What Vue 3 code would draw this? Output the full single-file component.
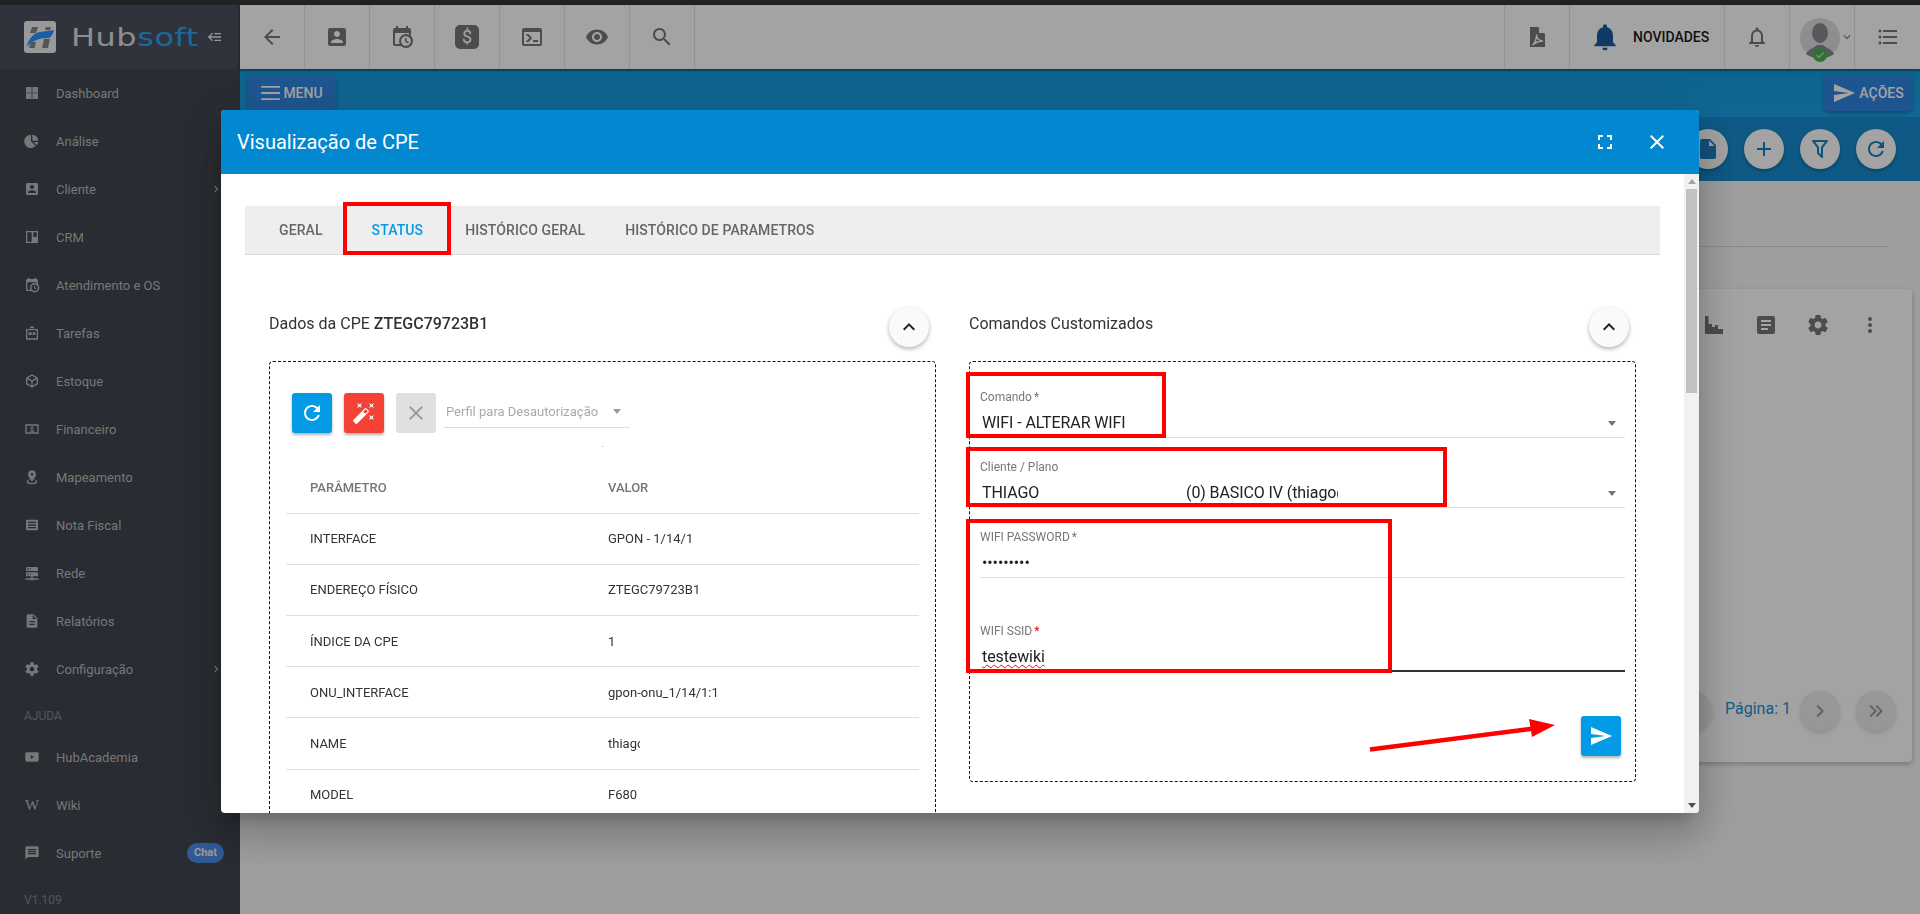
<template>
  <div class="app">
    <div class="top-strip"></div>
    <div class="shell">
      <!-- sidebar -->
      <aside class="sidebar">
        <div class="brand">
          <svg class="logo" viewBox="0 0 32 32">
            <rect width="32" height="32" rx="3" fill="#f0f0f0" />
            <path d="M8 6h6l-2 6H6zM22 6h5l-1 3h-5zM7 21h5l-1.5 6H5zM20 18h6l-2 9h-6z" fill="#858585" />
            <path d="M2.5 26C5 17 10 12 16 11L30 9C29 13 27 16 25 17L17 17.5C11 19 6 22 2.5 26z" fill="#2a93ff" />
          </svg>
          <span class="brand-name">Hub<span class="brand-soft">soft</span></span>
          <svg class="ic brand-toggle" viewBox="0 0 24 24"><path :d="icons.backburger" /></svg>
        </div>
        <nav class="nav">
          <template v-for="item in menu" :key="item.label">
            <div v-if="item.section" class="nav-section">{{ item.label }}</div>
            <div v-else class="nav-item">
              <span v-if="item.glyph" class="nav-glyph">W</span>
              <svg v-else-if="item.dollar" class="nav-icon" viewBox="0 0 24 24">
                <path d="M2 5h20v14H2zM4 7v10h16V7z" fill-rule="evenodd" />
                <text x="12" y="16" text-anchor="middle" class="dollar-small">$</text>
              </svg>
              <svg v-else class="nav-icon" viewBox="0 0 24 24"><path :d="item.icon" fill-rule="evenodd" /></svg>
              <span class="nav-label">{{ item.label }}</span>
              <svg v-if="item.arrow" class="nav-arrow" viewBox="0 0 24 24"><path :d="icons.chevronRight" /></svg>
              <span v-if="item.badge" class="nav-badge">{{ item.badge }}</span>
            </div>
          </template>
          <div class="nav-section nav-version">V1.109</div>
        </nav>
      </aside>

      <!-- pagina atras do modal -->
      <main class="main">
        <header class="topbar">
          <div class="cell"><svg class="ic" viewBox="0 0 24 24"><path :d="icons.back" /></svg></div>
          <div class="cell"><svg class="ic" viewBox="0 0 24 24"><path :d="icons.accountBox" /></svg></div>
          <div class="cell"><svg class="ic" viewBox="0 0 24 24"><path :d="icons.calendarClock" /></svg></div>
          <div class="cell">
            <svg class="ic" viewBox="0 0 24 24">
              <rect width="24" height="24" rx="5" />
              <text x="12" y="18" text-anchor="middle" class="dollar-big">$</text>
            </svg>
          </div>
          <div class="cell"><svg class="ic" viewBox="0 0 24 24"><path :d="icons.console" /></svg></div>
          <div class="cell"><svg class="ic" viewBox="0 0 24 24"><path :d="icons.eye" fill-rule="evenodd" /></svg></div>
          <div class="cell"><svg class="ic" viewBox="0 0 24 24"><path :d="icons.search" /></svg></div>
          <div class="topbar-space"></div>
          <div class="cell cell-first">
            <svg class="ic" viewBox="0 0 24 24">
              <path d="M5 2h8l7 7v13H5z" />
              <path d="M14 2.5l5.5 5.5H14z" class="pdf-fold" />
              <path d="M7.5 20c2-1.5 4.5-6 4-10.5 0 4 3 6.5 6.5 6.5-3.5 0-7.5 1.5-10.5 4z" class="pdf-mark" />
            </svg>
          </div>
          <div class="cell cell-news">
            <svg class="ic bell-blue" viewBox="0 0 24 24"><path :d="icons.bell" /></svg>
            <span class="news-text">NOVIDADES</span>
          </div>
          <div class="cell"><svg class="ic" viewBox="0 0 24 24"><path :d="icons.bellOutline" /></svg></div>
          <div class="cell cell-avatar">
            <svg class="avatar" viewBox="0 0 44 46">
              <circle cx="20" cy="20" r="20" fill="#dfdfdf" />
              <ellipse cx="20" cy="15" rx="8" ry="10" fill="#858a90" />
              <path d="M6 36c3-6 9-6 11-9h6c2 3 8 3 11 9-4 3-9 4-14 4S10 39 6 36z" fill="#858a90" />
              <circle cx="20" cy="37" r="7" fill="#4fb04f" />
              <path d="M16.5 37l2.5 2.5 4.5-5" fill="none" stroke="#b8dcb8" stroke-width="1.3" />
            </svg>
            <svg class="avatar-caret" viewBox="0 0 24 24"><path :d="icons.chevronDown" /></svg>
          </div>
          <div class="cell"><svg class="ic" viewBox="0 0 24 24"><path :d="icons.list" /></svg></div>
        </header>

        <div class="teal-bar">
          <button class="teal-btn">
            <svg class="menu-lines" viewBox="0 0 20 15"><path d="M0 0h20v2H0zM0 6.5h20v2H0zM0 13h20v2H0z" /></svg>
            MENU
          </button>
          <button class="teal-btn">
            <svg class="ic send-small" viewBox="0 0 24 24"><path :d="icons.send" /></svg>
            AÇÕES
          </button>
        </div>

        <div class="band">
          <button class="round-btn"><svg class="ic" viewBox="0 0 24 24"><path :d="icons.file" /></svg></button>
          <button class="round-btn"><svg class="ic" viewBox="0 0 24 24"><path :d="icons.plus" /></svg></button>
          <button class="round-btn"><svg class="ic" viewBox="0 0 24 24"><path :d="icons.filter" /></svg></button>
          <button class="round-btn"><svg class="ic" viewBox="0 0 24 24"><path :d="icons.refresh" /></svg></button>
        </div>

        <div class="page-head"></div>

        <section class="card">
          <div class="card-tools">
            <svg class="ic" viewBox="0 0 24 24"><path d="M3 21V3h3.5v8H10v3h3v-2h3v4h5v5z" /></svg>
            <svg class="ic" viewBox="0 0 24 24"><path :d="icons.article" /></svg>
            <svg class="ic" viewBox="0 0 24 24"><path :d="icons.gear" /></svg>
            <svg class="ic" viewBox="0 0 24 24"><path :d="icons.dots" /></svg>
          </div>
          <div class="pager">
            <button class="pager-btn"></button>
            <span class="pager-text">Página: 1</span>
            <button class="pager-btn"><svg class="ic" viewBox="0 0 24 24"><path :d="icons.chevronRight" /></svg></button>
            <button class="pager-btn"><svg class="ic" viewBox="0 0 24 24"><path :d="icons.chevronDouble" /></svg></button>
          </div>
        </section>
      </main>
    </div>

    <!-- modal -->
    <div class="overlay">
      <div class="modal">
        <div class="modal-head">
          <span class="modal-title">Visualização de CPE</span>
          <svg class="ic" viewBox="0 0 24 24"><path :d="icons.fullscreen" /></svg>
          <svg class="ic" viewBox="0 0 24 24"><path :d="icons.close" /></svg>
        </div>
        <div class="modal-body">
          <div class="modal-scroll">
            <div class="tabs">
              <div v-for="tab in tabs" :key="tab" :class="['tab', tab === 'Status' ? 'active' : '']">{{ tab }}</div>
            </div>

            <div class="columns">
              <div class="column">
                <div class="col-head">
                  <div class="col-title">Dados da CPE <b>ZTEGC79723B1</b></div>
                  <button class="collapse-btn"><svg class="ic" viewBox="0 0 24 24"><path :d="icons.chevronUp" /></svg></button>
                </div>
                <div class="dash-box">
                  <div class="toolbar">
                    <button class="tool-btn blue"><svg class="ic" viewBox="0 0 24 24"><path :d="icons.refresh" /></svg></button>
                    <button class="tool-btn red"><svg class="ic" viewBox="0 0 24 24"><path :d="icons.wand" /></svg></button>
                    <button class="tool-btn gray"><svg class="ic" viewBox="0 0 24 24"><path :d="icons.close" /></svg></button>
                    <div class="mini-select">
                      <span>Perfil para Desautorização</span>
                      <i class="caret"></i>
                    </div>
                  </div>
                  <div class="speck">.</div>
                  <table class="params">
                    <thead>
                      <tr><th class="col-param">PARÂMETRO</th><th>VALOR</th></tr>
                    </thead>
                    <tbody>
                      <tr v-for="row in params" :key="row.name">
                        <td>{{ row.name }}</td>
                        <td><span :class="row.clip ? 'clip-name' : ''">{{ row.value }}</span></td>
                      </tr>
                    </tbody>
                  </table>
                </div>
              </div>

              <div class="column">
                <div class="col-head">
                  <div class="col-title">Comandos Customizados</div>
                  <button class="collapse-btn"><svg class="ic" viewBox="0 0 24 24"><path :d="icons.chevronUp" /></svg></button>
                </div>
                <div class="dash-box form-box">
                  <div class="field">
                    <label>Comando<em>*</em></label>
                    <div class="value"><span>WIFI - ALTERAR WIFI</span><i class="caret"></i></div>
                  </div>
                  <div class="field">
                    <label>Cliente / Plano</label>
                    <div class="value">
                      <span class="client-name">THIAGO</span>
                      <span class="client-plan">(0) BASICO IV (thiago@wiki)</span>
                      <i class="caret"></i>
                    </div>
                  </div>
                  <div class="field">
                    <label>WIFI PASSWORD<em>*</em></label>
                    <div class="value">•••••••••</div>
                  </div>
                  <div class="field focused">
                    <label>WIFI SSID<em class="req">*</em></label>
                    <div class="value"><span class="spell">testewiki</span></div>
                  </div>
                  <div class="form-actions">
                    <button class="tool-btn blue"><svg class="ic" viewBox="0 0 24 24"><path :d="icons.send" /></svg></button>
                  </div>
                </div>
              </div>
            </div>
          </div>
          <div class="scrollbar">
            <i class="sb-up"></i>
            <div class="sb-thumb"></div>
            <i class="sb-down"></i>
          </div>
        </div>
      </div>

      <!-- marcacoes vermelhas do tutorial -->
      <div class="mark mark-tab"></div>
      <div class="mark mark-cmd"></div>
      <div class="mark mark-client"></div>
      <div class="mark mark-wifi"></div>
      <svg class="mark-arrow" viewBox="0 0 200 40">
        <path d="M2 33.5L166 12.5" stroke="#f00" stroke-width="4.5" fill="none" />
        <path d="M161 3L187 9 164 21z" fill="#f00" />
      </svg>
    </div>
  </div>
</template>

<script setup>
const icons = {
  backburger: 'M5,13L9,17L7.6,18.42L1.18,12L7.6,5.58L9,7L5,11H21V13H5M21,6V8H11V6H21M21,16V18H11V16H21Z',
  chevronRight: 'M10 6L8.59 7.41 13.17 12l-4.58 4.59L10 18l6-6z',
  chevronDouble: 'M5.59,7.41L7,6L13,12L7,18L5.59,16.59L10.17,12L5.59,7.41M11.59,7.41L13,6L19,12L13,18L11.59,16.59L16.17,12L11.59,7.41Z',
  chevronDown: 'M7.41 8.59L12 13.17l4.59-4.58L18 10l-6 6-6-6z',
  chevronUp: 'M7.41 15.41L12 10.83l4.59 4.58L18 14l-6-6-6 6z',
  back: 'M20 11H7.83l5.59-5.59L12 4l-8 8 8 8 1.41-1.41L7.83 13H20v-2z',
  accountBox: 'M3 5v14c0 1.1.89 2 2 2h14c1.1 0 2-.9 2-2V5c0-1.1-.9-2-2-2H5c-1.11 0-2 .9-2 2zm12 4c0 1.66-1.34 3-3 3s-3-1.34-3-3 1.34-3 3-3 3 1.34 3 3zm-9 8c0-2 4-3.1 6-3.1s6 1.1 6 3.1v1H6v-1z',
  calendarClock: 'M15,13H16.5V15.82L18.94,17.23L18.19,18.53L15,16.69V13M19,8H5V19H9.67C9.24,18.09 9,17.07 9,16A7,7 0 0,1 16,9C17.07,9 18.09,9.24 19,9.67V8M5,21C3.89,21 3,20.1 3,19V5C3,3.89 3.89,3 5,3H6V1H8V3H16V1H18V3H19A2,2 0 0,1 21,5V11.1C22.24,12.36 23,14.09 23,16A7,7 0 0,1 16,23C14.09,23 12.36,22.24 11.1,21H5M16,11.15A4.85,4.85 0 0,0 11.15,16C11.15,18.68 13.32,20.85 16,20.85A4.85,4.85 0 0,0 20.85,16C20.85,13.32 18.68,11.15 16,11.15Z',
  console: 'M20,19V7H4V19H20M20,3A2,2 0 0,1 22,5V19A2,2 0 0,1 20,21H4A2,2 0 0,1 2,19V5C2,3.89 2.9,3 4,3H20M13,17V15H18V17H13M9.58,13L5.57,9H8.4L11.7,12.3C12.09,12.69 12.09,13.33 11.7,13.72L8.42,17H5.59L9.58,13Z',
  eye: 'M12 4.5C7 4.5 2.73 7.61 1 12c1.73 4.39 6 7.5 11 7.5s9.27-3.11 11-7.5c-1.73-4.39-6-7.5-11-7.5zM12 17c-2.76 0-5-2.24-5-5s2.24-5 5-5 5 2.24 5 5-2.24 5-5 5zm0-8c-1.66 0-3 1.34-3 3s1.34 3 3 3 3-1.34 3-3-1.34-3-3-3z',
  search: 'M15.5 14h-.79l-.28-.27C15.41 12.59 16 11.11 16 9.5 16 5.91 13.09 3 9.5 3S3 5.91 3 9.5 5.91 16 9.5 16c1.61 0 3.09-.59 4.23-1.57l.27.28v.79l5 4.99L20.49 19l-4.99-5zm-6 0C7.01 14 5 11.99 5 9.5S7.01 5 9.5 5 14 7.01 14 9.5 11.99 14 9.5 14z',
  bell: 'M12 22c1.1 0 2-.9 2-2h-4c0 1.1.89 2 2 2zm6-6v-5c0-3.07-1.64-5.64-4.5-6.32V4c0-.83-.67-1.5-1.5-1.5s-1.5.67-1.5 1.5v.68C7.63 5.36 6 7.92 6 11v5l-2 2v1h16v-1l-2-2z',
  bellOutline: 'M12 22c1.1 0 2-.9 2-2h-4c0 1.1.9 2 2 2zm6-6v-5c0-3.07-1.63-5.64-4.5-6.32V4c0-.83-.67-1.5-1.5-1.5s-1.5.67-1.5 1.5v.68C7.64 5.36 6 7.92 6 11v5l-2 2v1h16v-1l-2-2zm-2 1H8v-6c0-2.48 1.51-4.5 4-4.5s4 2.02 4 4.5v6z',
  list: 'M4 10.5c-.83 0-1.5.67-1.5 1.5s.67 1.5 1.5 1.5 1.5-.67 1.5-1.5-.67-1.5-1.5-1.5zm0-6c-.83 0-1.5.67-1.5 1.5S3.17 7.5 4 7.5 5.5 6.83 5.5 6 4.83 4.5 4 4.5zm0 12c-.83 0-1.5.68-1.5 1.5s.68 1.5 1.5 1.5 1.5-.68 1.5-1.5-.67-1.5-1.5-1.5zM7 19h14v-2H7v2zm0-6h14v-2H7v2zm0-8v2h14V5H7z',
  send: 'M2.01 21L23 12 2.01 3 2 10l15 2-15 2z',
  fullscreen: 'M7 14H5v5h5v-2H7v-3zm-2-4h2V7h3V5H5v5zm12 7h-3v2h5v-5h-2v3zM14 5v2h3v3h2V5h-5z',
  close: 'M19 6.41L17.59 5 12 10.59 6.41 5 5 6.41 10.59 12 5 17.59 6.41 19 12 13.41 17.59 19 19 17.59 13.41 12z',
  refresh: 'M17.65 6.35C16.2 4.9 14.21 4 12 4c-4.42 0-7.99 3.58-7.99 8s3.57 8 7.99 8c3.73 0 6.84-2.55 7.73-6h-2.08c-.82 2.33-3.04 4-5.65 4-3.31 0-6-2.69-6-6s2.69-6 6-6c1.66 0 3.14.69 4.22 1.78L13 11h7V4l-2.35 2.35z',
  wand: 'M7.5,5.6L5,7L6.4,4.5L5,2L7.5,3.4L10,2L8.6,4.5L10,7L7.5,5.6M19.5,15.4L22,14L20.6,16.5L22,19L19.5,17.6L17,19L18.4,16.5L17,14L19.5,15.4M22,2L20.6,4.5L22,7L19.5,5.6L17,7L18.4,4.5L17,2L19.5,3.4L22,2M13.34,12.78L15.78,10.34L13.66,8.22L11.22,10.66L13.34,12.78M14.37,7.29L16.71,9.63C17.1,10 17.1,10.65 16.71,11.04L5.04,22.71C4.65,23.1 4,23.1 3.63,22.71L1.29,20.37C0.9,20 0.9,19.35 1.29,18.96L12.96,7.29C13.35,6.9 14,6.9 14.37,7.29Z',
  plus: 'M19 13h-6v6h-2v-6H5v-2h6V5h2v6h6v2z',
  filter: 'M15,19.88C15.04,20.18 14.94,20.5 14.71,20.71C14.32,21.1 13.69,21.1 13.3,20.71L9.29,16.7C9.06,16.47 8.96,16.16 9,15.87V10.75L4.21,4.62C3.87,4.19 3.95,3.56 4.38,3.22C4.57,3.08 4.78,3 5,3V3H19V3C19.22,3 19.43,3.08 19.62,3.22C20.05,3.56 20.13,4.19 19.79,4.62L15,10.75V19.88M7.04,5L11,10.06V15.58L13,17.58V10.05L16.96,5H7.04Z',
  file: 'M6 2c-1.1 0-1.99.9-1.99 2L4 20c0 1.1.89 2 1.99 2H18c1.1 0 2-.9 2-2V8l-6-6H6zm7 7V3.5L18.5 9H13z',
  article: 'M19 3H5c-1.1 0-2 .9-2 2v14c0 1.1.9 2 2 2h14c1.1 0 2-.9 2-2V5c0-1.1-.9-2-2-2zm-5 14H7v-2h7v2zm3-4H7v-2h10v2zm0-4H7V7h10v2z',
  gear: 'M19.43 12.98c.04-.32.07-.64.07-.98s-.03-.66-.07-.98l2.11-1.65c.19-.15.24-.42.12-.64l-2-3.46c-.12-.22-.39-.3-.61-.22l-2.49 1c-.52-.4-1.08-.73-1.69-.98l-.38-2.65C14.46 2.18 14.25 2 14 2h-4c-.25 0-.46.18-.49.42l-.38 2.65c-.61.25-1.17.59-1.69.98l-2.49-1c-.23-.09-.49 0-.61.22l-2 3.46c-.13.22-.07.49.12.64l2.11 1.65c-.04.32-.07.65-.07.98s.03.66.07.98l-2.11 1.65c-.19.15-.24.42-.12.64l2 3.46c.12.22.39.3.61.22l2.49-1c.52.4 1.08.73 1.69.98l.38 2.65c.03.24.24.42.49.42h4c.25 0 .46-.18.49-.42l.38-2.65c.61-.25 1.17-.59 1.69-.98l2.49 1c.23.09.49 0 .61-.22l2-3.46c.12-.22.07-.49-.12-.64l-2.11-1.65zM12 15.5c-1.93 0-3.5-1.57-3.5-3.5s1.57-3.5 3.5-3.5 3.5 1.57 3.5 3.5-1.57 3.5-3.5 3.5z',
  dots: 'M12 8c1.1 0 2-.9 2-2s-.9-2-2-2-2 .9-2 2 .9 2 2 2zm0 2c-1.1 0-2 .9-2 2s.9 2 2 2 2-.9 2-2-.9-2-2-2zm0 6c-1.1 0-2 .9-2 2s.9 2 2 2 2-.9 2-2-.9-2-2-2z'
}

const menu = [
  { label: 'Dashboard', icon: 'M3 3h8.5v8.5H3zM12.5 3H21v8.5h-8.5zM3 12.5h8.5V21H3zM12.5 12.5H21V21h-8.5z' },
  { label: 'Análise', icon: 'M10.5 2.5v10l7 7A10 10 0 1 1 10.5 2.5zM12.5 2.5a10 10 0 0 1 9 9h-9zM14 13.5h7.5a10 10 0 0 1-2.5 5z' },
  { label: 'Cliente', icon: icons.accountBox, arrow: true },
  { label: 'CRM', icon: 'M3 3h18v18H3zM5 5v14h6.5V5zM14 5v7h5V5z' },
  { label: 'Atendimento e OS', icon: icons.calendarClock },
  { label: 'Tarefas', icon: 'M12 1l4 4H8zM3 6h18v16H3zM5 8v12h14V8zM7 11h4.5v4H7zM13 11h4v4h-4z' },
  { label: 'Estoque', icon: 'M21,16.5C21,16.88 20.79,17.21 20.47,17.38L12.57,21.82C12.41,21.94 12.21,22 12,22C11.79,22 11.59,21.94 11.43,21.82L3.53,17.38C3.21,17.21 3,16.88 3,16.5V7.5C3,7.12 3.21,6.79 3.53,6.62L11.43,2.18C11.59,2.06 11.79,2 12,2C12.21,2 12.41,2.06 12.57,2.18L20.47,6.62C20.79,6.79 21,7.12 21,7.5V16.5M12,4.15L6.04,7.5L12,10.85L17.96,7.5L12,4.15M5,15.91L11,19.29V12.58L5,9.21V15.91M19,15.91V9.21L13,12.58V19.29L19,15.91Z' },
  { label: 'Financeiro', dollar: true },
  { label: 'Mapeamento', icon: 'M12,2C15.31,2 18,4.66 18,7.95C18,12.41 12,19 12,19C12,19 6,12.41 6,7.95C6,4.66 8.69,2 12,2M12,6A2,2 0 0,0 10,8A2,2 0 0,0 12,10A2,2 0 0,0 14,8A2,2 0 0,0 12,6M20,19C20,21.21 16.42,23 12,23C7.58,23 4,21.21 4,19C4,17.71 5.22,16.56 7.11,15.83L7.75,16.74C6.67,17.19 6,17.81 6,18.5C6,19.88 8.69,21 12,21C15.31,21 18,19.88 18,18.5C18,17.81 17.33,17.19 16.25,16.74L16.89,15.83C18.78,16.56 20,17.71 20,19Z' },
  { label: 'Nota Fiscal', icon: 'M3 4h18v16H3zM6 7v2h12V7zM6 11v2h12v-2zM6 15v2h12v-2z' },
  { label: 'Rede', icon: 'M13,19H14A1,1 0 0,1 15,20H22V22H15A1,1 0 0,1 14,23H10A1,1 0 0,1 9,22H2V20H9A1,1 0 0,1 10,19H11V17H4A1,1 0 0,1 3,16V12A1,1 0 0,1 4,11H20A1,1 0 0,1 21,12V16A1,1 0 0,1 20,17H13V19M4,3H20A1,1 0 0,1 21,4V8A1,1 0 0,1 20,9H4A1,1 0 0,1 3,8V4A1,1 0 0,1 4,3M9,7H10V5H9V7M9,15H10V13H9V15M5,5V7H7V5H5M5,13V15H7V13H5Z' },
  { label: 'Relatórios', icon: 'M14 2H6c-1.1 0-1.99.9-1.99 2L4 20c0 1.1.89 2 1.99 2H18c1.1 0 2-.9 2-2V8l-6-6zm2 16H8v-2h8v2zm0-4H8v-2h8v2zm-3-5V3.5L18.5 9H13z' },
  { label: 'Configuração', icon: icons.gear, arrow: true },
  { label: 'AJUDA', section: true },
  { label: 'HubAcademia', icon: 'M4 5h16a2 2 0 0 1 2 2v10a2 2 0 0 1-2 2H4a2 2 0 0 1-2-2V7a2 2 0 0 1 2-2zM10 9v6l5-3z' },
  { label: 'Wiki', glyph: true },
  { label: 'Suporte', icon: 'M20 2H4c-1.1 0-1.99.9-1.99 2L2 22l4-4h14c1.1 0 2-.9 2-2V4c0-1.1-.9-2-2-2zm-2 12H6v-2h12v2zm0-3H6V9h12v2zm0-3H6V6h12v2z', badge: 'Chat' }
]

const tabs = ['Geral', 'Status', 'Histórico Geral', 'Histórico de Parametros']

const params = [
  { name: 'INTERFACE', value: 'GPON - 1/14/1' },
  { name: 'ENDEREÇO FÍSICO', value: 'ZTEGC79723B1' },
  { name: 'ÍNDICE DA CPE', value: '1' },
  { name: 'ONU_INTERFACE', value: 'gpon-onu_1/14/1:1' },
  { name: 'NAME', value: 'thiago', clip: true },
  { name: 'MODEL', value: 'F680' }
]
</script>

<style>
html, body {
  margin: 0;
  background: #f7f7f7;
}
</style>

<style scoped>
.app {
  height: 100vh;
  overflow: hidden;
  display: flex;
  flex-direction: column;
  font-family: Roboto, "Liberation Sans", sans-serif;
  background: #f7f7f7;
}

button {
  font-family: inherit;
  border: none;
  padding: 0;
  cursor: pointer;
}

.ic {
  width: 24px;
  height: 24px;
  fill: currentColor;
  flex: 0 0 auto;
}

.top-strip {
  height: 5px;
  background: #34363c;
  flex: 0 0 auto;
}

.shell {
  flex: 1;
  display: flex;
  min-height: 0;
}

/* sidebar */
.sidebar {
  width: 240px;
  flex: 0 0 240px;
  background: #40454f;
  color: #bbb;
}

.brand {
  height: 64px;
  background: #4b505e;
  display: flex;
  align-items: center;
  padding-left: 24px;
  box-sizing: border-box;
}

.logo {
  width: 32px;
  height: 32px;
  flex: 0 0 auto;
}

.brand-name {
  display: inline-block;
  width: 133px;
  margin-left: 15px;
  font-family: "DejaVu Sans", sans-serif;
  font-size: 25px;
  letter-spacing: 0.4px;
  white-space: nowrap;
  color: #dedede;
  transform: scaleX(1.28);
  transform-origin: left center;
}

.brand-soft {
  color: #29a5f0;
}

.brand-toggle {
  width: 16px;
  height: 16px;
  margin-left: 3px;
  color: #eee;
}

.nav {
  font-size: 13px;
}

.nav-item {
  height: 48px;
  display: flex;
  align-items: center;
  padding-left: 24px;
}

.nav-icon {
  width: 16px;
  height: 16px;
  fill: #bbb;
  flex: 0 0 auto;
}

.dollar-small {
  font-size: 11px;
  font-weight: 700;
  fill: #bbb;
}

.nav-glyph {
  width: 16px;
  font-family: "Liberation Serif", serif;
  font-size: 15px;
  text-align: center;
}

.nav-label {
  margin-left: 16px;
  flex: 1;
}

.nav-arrow {
  width: 14px;
  height: 14px;
  fill: #bbb;
  margin-right: 17px;
}

.nav-badge {
  width: 37px;
  height: 20px;
  line-height: 20px;
  text-align: center;
  border-radius: 10px;
  background: #4a8de8;
  color: #eee;
  font-size: 11px;
  font-weight: 700;
  margin-right: 16px;
}

.nav-section {
  height: 40px;
  padding: 16px 0 0 24px;
  box-sizing: border-box;
  font-size: 12px;
  color: #838690;
}

/* pagina */
.main {
  flex: 1;
  min-width: 0;
  display: flex;
  flex-direction: column;
}

.topbar {
  height: 64px;
  flex: 0 0 auto;
  background: #fff;
  display: flex;
  box-shadow: 0 1px 3px rgba(0, 0, 0, 0.6);
  position: relative;
  color: #777;
}

.topbar-space {
  flex: 1;
  border-right: 1px solid #e4e4e4;
}

.cell {
  width: 65px;
  box-sizing: border-box;
  border-right: 1px solid #e4e4e4;
  display: flex;
  align-items: center;
  justify-content: center;
}

.cell:last-child {
  border-right: none;
}

.dollar-big {
  font-size: 18px;
  fill: #fff;
}

.pdf-fold {
  fill: #fff;
}

.pdf-mark {
  fill: none;
  stroke: #fff;
  stroke-width: 1.4;
}

.cell-news {
  width: 155px;
  justify-content: flex-start;
  padding-left: 19px;
}

.bell-blue {
  width: 32px;
  height: 32px;
  color: #175b9f;
}

.news-text {
  margin-left: 12px;
  font-size: 14px;
  font-weight: 500;
  color: #1a1a1a;
}

.cell-avatar {
  justify-content: flex-start;
  padding-left: 10px;
}

.avatar {
  width: 44px;
  height: 46px;
  margin-top: 8px;
}

.avatar-caret {
  width: 14px;
  height: 14px;
  fill: #777;
  margin-left: -4px;
}

.teal-bar {
  height: 48px;
  flex: 0 0 auto;
  box-sizing: border-box;
  padding: 6px 8px 0;
  display: flex;
  justify-content: space-between;
  background: linear-gradient(#1699dd, #1ba3ea);
}

.teal-btn {
  width: 88px;
  height: 36px;
  border-radius: 4px;
  background: #3085e1;
  color: #fff;
  font-size: 14px;
  font-weight: 500;
  display: flex;
  align-items: center;
  justify-content: center;
  gap: 3px;
  box-shadow: 0 2px 4px rgba(0, 0, 0, 0.25);
}

.menu-lines {
  width: 19px;
  height: 14px;
  fill: #fff;
}

.band {
  height: 64px;
  flex: 0 0 auto;
  background: #168cd1;
  display: flex;
  align-items: center;
  justify-content: flex-end;
  gap: 16px;
  padding-right: 24px;
  box-sizing: border-box;
}

.round-btn {
  width: 40px;
  height: 40px;
  border-radius: 50%;
  background: #fff;
  color: #1d7fc0;
  display: flex;
  align-items: center;
  justify-content: center;
  box-shadow: 0 2px 4px rgba(0, 0, 0, 0.25);
}

.page-head {
  height: 66px;
  flex: 0 0 auto;
  margin: 0 32px 0 8px;
  box-sizing: border-box;
  border-bottom: 1px solid #d8d8d8;
}

.card {
  margin: 42px 8px 0;
  height: 473px;
  background: #fff;
  border-radius: 4px;
  box-shadow: 0 2px 5px rgba(0, 0, 0, 0.25);
  display: flex;
  flex-direction: column;
  justify-content: space-between;
  color: #777;
}

.card-tools {
  display: flex;
  justify-content: flex-end;
  gap: 28px;
  padding: 24px 30px 0 0;
}

.pager {
  display: flex;
  align-items: center;
  justify-content: flex-end;
  padding: 0 16px 31px 0;
}

.pager-btn {
  width: 40px;
  height: 40px;
  border-radius: 50%;
  background: #ececec;
  color: #999;
  display: flex;
  align-items: center;
  justify-content: center;
  margin-left: 16px;
  box-shadow: 0 2px 4px rgba(0, 0, 0, 0.15);
}

.pager-text {
  font-size: 16px;
  color: #2190d6;
  margin: 0 -7px 0 13px;
  padding-bottom: 6px;
}

/* modal */
.overlay {
  position: fixed;
  inset: 0;
  background: rgba(0, 0, 0, 0.36);
  padding: 110px 221px 0;
  box-sizing: border-box;
}

.modal {
  height: 703px;
  background: #fff;
  border-radius: 4px;
  overflow: hidden;
  display: flex;
  flex-direction: column;
  box-shadow: 0 11px 15px -7px rgba(0, 0, 0, 0.2), 0 24px 38px 3px rgba(0, 0, 0, 0.14), 0 9px 46px 8px rgba(0, 0, 0, 0.12);
}

.modal-head {
  height: 64px;
  flex: 0 0 auto;
  background: #0288d1;
  color: #fff;
  display: flex;
  align-items: center;
  gap: 28px;
  padding: 0 30px 0 16px;
}

.modal-title {
  flex: 1;
  font-size: 20px;
}

.modal-body {
  flex: 1;
  min-height: 0;
  display: flex;
}

.modal-scroll {
  flex: 1;
  min-width: 0;
  padding: 32px 24px 0;
  box-sizing: border-box;
}

.scrollbar {
  width: 15px;
  flex: 0 0 15px;
  background: #f1f1f1;
  display: flex;
  flex-direction: column;
  align-items: center;
}

.sb-up {
  margin-top: 5px;
  border: 4px solid transparent;
  border-top: 0;
  border-bottom: 5px solid #a3a3a3;
}

.sb-thumb {
  width: 11px;
  height: 204px;
  margin-top: 5px;
  background: #c1c1c1;
}

.sb-down {
  margin-top: auto;
  margin-bottom: 5px;
  border: 4px solid transparent;
  border-bottom: 0;
  border-top: 5px solid #505050;
}

.tabs {
  display: flex;
  height: 49px;
  box-sizing: border-box;
  background: #eee;
  border-bottom: 1px solid #ddd;
  padding-left: 14px;
}

.tab {
  padding: 0 20px;
  display: flex;
  align-items: center;
  font-size: 14px;
  font-weight: 500;
  letter-spacing: 0.1px;
  text-transform: uppercase;
  color: #666;
}

.tab.active {
  color: #039be5;
  margin-left: 9px;
}

.tab.active + .tab {
  margin-left: 2px;
}

.columns {
  display: grid;
  grid-template-columns: 1fr 1fr;
  gap: 33px;
  align-items: start;
  padding: 52px 24px 0;
}

.col-head {
  height: 40px;
  margin-bottom: 14px;
  display: flex;
  justify-content: space-between;
  padding-right: 7px;
}

.col-title {
  font-size: 16px;
  line-height: 33px;
  color: #333;
}

.col-title b {
  font-weight: 500;
}

.collapse-btn {
  width: 40px;
  height: 40px;
  border-radius: 50%;
  background: #fafafa;
  color: #212121;
  display: flex;
  align-items: center;
  justify-content: center;
  box-shadow: 0 2px 4px rgba(0, 0, 0, 0.3);
}

.dash-box {
  border: 1px dashed #111;
  border-radius: 4px;
  padding: 31px 16px 0;
}

.toolbar {
  display: flex;
  gap: 12px;
  padding-left: 6px;
}

.tool-btn {
  width: 40px;
  height: 40px;
  border-radius: 3px;
  color: #fff;
  display: flex;
  align-items: center;
  justify-content: center;
}

.blue {
  background: #039be5;
  box-shadow: 0 2px 3px rgba(0, 0, 0, 0.3);
}

.red {
  background: #f44336;
  box-shadow: 0 2px 3px rgba(0, 0, 0, 0.3);
}

.gray {
  background: #e0e0e0;
  color: #9e9e9e;
}

.mini-select {
  width: 186px;
  height: 35px;
  box-sizing: border-box;
  margin-left: -4px;
  padding: 2px 9px 0 2px;
  border-bottom: 1px solid #ddd;
  display: flex;
  align-items: center;
  justify-content: space-between;
  font-size: 13px;
  color: #aaa;
}

.mini-select .caret {
  border-top-color: #999;
}

.caret {
  border: 4px solid transparent;
  border-bottom: 0;
  border-top: 5px solid #757575;
  flex: 0 0 auto;
}

.speck {
  height: 29px;
  line-height: 24px;
  text-align: center;
  font-size: 8px;
  color: #777;
}

.params {
  width: 100%;
  table-layout: fixed;
  border-collapse: collapse;
  font-size: 13px;
  color: #333;
}

.params tr {
  height: 51.2px;
  border-bottom: 1px solid #e0e0e0;
}

.params th {
  font-weight: 500;
  color: #777;
  text-align: left;
  padding: 0 0 0 24px;
}

.params td {
  padding: 0 0 0 24px;
}

.params .col-param {
  width: 298px;
  box-sizing: border-box;
}

.clip-name {
  display: inline-block;
  width: 32px;
  overflow: hidden;
  vertical-align: bottom;
}

.form-box {
  padding: 6px 10px 25px;
}

.field {
  height: 70px;
  box-sizing: border-box;
  padding-top: 21px;
  border-bottom: 1px solid #e0e0e0;
}

.field label {
  display: block;
  font-size: 12px;
  line-height: 16px;
  color: #777;
}

.field label em {
  font-style: normal;
  margin-left: 2px;
}

.field label .req {
  color: #f00;
}

.value {
  margin-top: 6px;
  height: 24px;
  line-height: 24px;
  font-size: 16px;
  letter-spacing: -0.1px;
  color: #212121;
  padding: 0 9px 0 2px;
  display: flex;
  align-items: center;
}

.value .caret {
  margin-left: auto;
}

.client-name {
  width: 204px;
}

.client-plan {
  width: 152px;
  overflow: hidden;
  white-space: nowrap;
}

.focused {
  margin-top: 24px;
  border-bottom: 2px solid #2b2f3a;
}

.spell {
  text-decoration: underline wavy #f00 1px;
  text-underline-offset: 2px;
}

.form-actions {
  display: flex;
  justify-content: flex-end;
  padding: 44px 4px 0 0;
}

/* marcacoes */
.mark {
  position: absolute;
  border: 4px solid #f00;
  box-sizing: border-box;
}

.mark-tab {
  left: 343px;
  top: 202px;
  width: 108px;
  height: 53px;
}

.mark-cmd {
  left: 966px;
  top: 372px;
  width: 200px;
  height: 66px;
}

.mark-client {
  left: 966px;
  top: 447px;
  width: 481px;
  height: 60px;
}

.mark-wifi {
  left: 966px;
  top: 519px;
  width: 426px;
  height: 154px;
}

.mark-arrow {
  position: absolute;
  left: 1368px;
  top: 716px;
  width: 200px;
  height: 40px;
}
</style>
